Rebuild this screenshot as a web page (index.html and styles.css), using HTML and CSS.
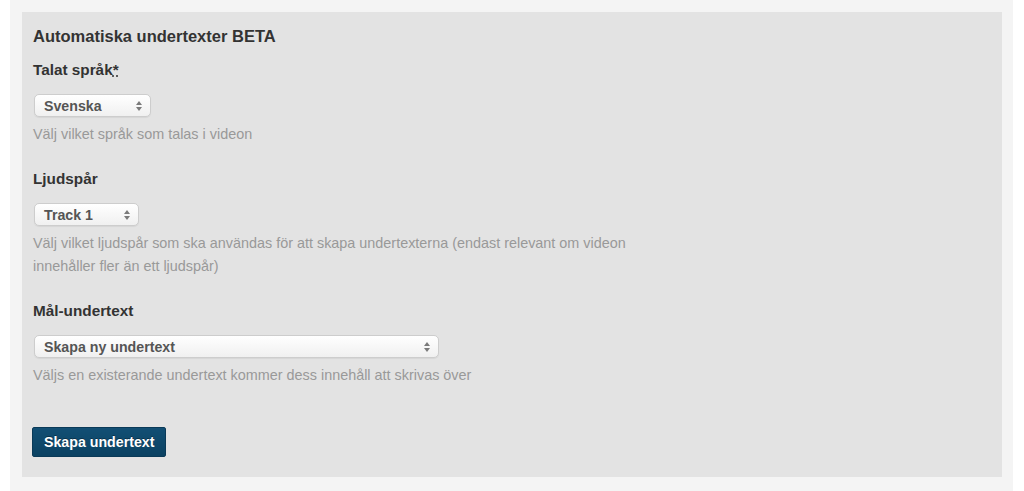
FILE: index.html
```html
<!DOCTYPE html>
<html lang="sv">
<head>
<meta charset="utf-8">
<title>Automatiska undertexter</title>
<link rel="stylesheet" href="styles.css">
</head>
<body>
<div class="page">
  <div class="panel">
    <h3 class="title">Automatiska undertexter BETA</h3>

    <div class="field">
      <div class="label">Talat språk<abbr class="req" title="obligatoriskt">*</abbr></div>
      <div class="select sel-lang">
        <span>Svenska</span>
        <svg class="arrows" width="6" height="10" viewBox="0 0 6 10"><path d="M3 0 L6 4 L0 4 Z M0 6 L6 6 L3 10 Z" fill="#7a7a7a"/></svg>
      </div>
      <p class="help">Välj vilket språk som talas i videon</p>
    </div>

    <div class="field">
      <div class="label">Ljudspår</div>
      <div class="select sel-track">
        <span>Track 1</span>
        <svg class="arrows" width="6" height="10" viewBox="0 0 6 10"><path d="M3 0 L6 4 L0 4 Z M0 6 L6 6 L3 10 Z" fill="#7a7a7a"/></svg>
      </div>
      <p class="help">Välj vilket ljudspår som ska användas för att skapa undertexterna (endast relevant om videon innehåller fler än ett ljudspår)</p>
    </div>

    <div class="field">
      <div class="label">Mål-undertext</div>
      <div class="select sel-target">
        <span>Skapa ny undertext</span>
        <svg class="arrows" width="6" height="10" viewBox="0 0 6 10"><path d="M3 0 L6 4 L0 4 Z M0 6 L6 6 L3 10 Z" fill="#7a7a7a"/></svg>
      </div>
      <p class="help">Väljs en existerande undertext kommer dess innehåll att skrivas över</p>
    </div>

    <button class="btn" type="button">Skapa undertext</button>
  </div>
</div>
</body>
</html>
```

FILE: styles.css
```css
html, body {
  margin: 0;
  padding: 0;
  background: #ffffff;
  height: 100%;
}

body {
  font-family: "Liberation Sans", Arial, Helvetica, sans-serif;
  color: #333333;
}

.page {
  margin: 0 11px 0 10px;
  background: #f4f4f4;
  padding: 12px 11px 14px 12px;
  min-height: 491px;
  box-sizing: border-box;
}

.panel {
  background: #e3e3e3;
  padding: 14px 11px 20px 10px;
}

.title {
  margin: 0 0 14px 1px;
  font-size: 16.5px;
  font-weight: bold;
  line-height: 20px;
  color: #333333;
}

.field {
  margin-bottom: 23px;
  padding-left: 1px;
}

.field:last-of-type {
  margin-bottom: 40px;
}

.label {
  font-size: 15.3px;
  font-weight: bold;
  line-height: 20px;
  color: #333333;
  margin-bottom: 14px;
}

.req {
  text-decoration: underline dotted;
  text-decoration-color: #333;
  cursor: help;
}

.select {
  display: flex;
  align-items: center;
  justify-content: space-between;
  box-sizing: border-box;
  height: 23px;
  margin-left: 1px;
  padding: 0 8px 0 9px;
  border: 1px solid #cdcdcd;
  border-radius: 5px;
  background: linear-gradient(#ffffff, #f0f0f0);
  box-shadow: 0 1px 1px rgba(0, 0, 0, 0.06);
  font-size: 14.2px;
  font-weight: bold;
  color: #555555;
}

.sel-lang { width: 117px; }
.sel-track { width: 105px; }
.sel-target { width: 405px; }

.arrows {
  display: block;
  flex: none;
}

.help {
  margin: 6px 0 0 0;
  max-width: 630px;
  font-size: 14.4px;
  line-height: 23px;
  color: #999999;
}

.btn {
  display: block;
  height: 30px;
  padding: 0 11px;
  border: 1px solid #0a3a58;
  border-radius: 2px;
  background: linear-gradient(#124f74, #0b4262);
  color: #ffffff;
  font-family: "Liberation Sans", Arial, Helvetica, sans-serif;
  font-size: 14.2px;
  font-weight: bold;
  text-shadow: 0 -1px 0 rgba(0, 0, 0, 0.35);
  cursor: pointer;
}
```
